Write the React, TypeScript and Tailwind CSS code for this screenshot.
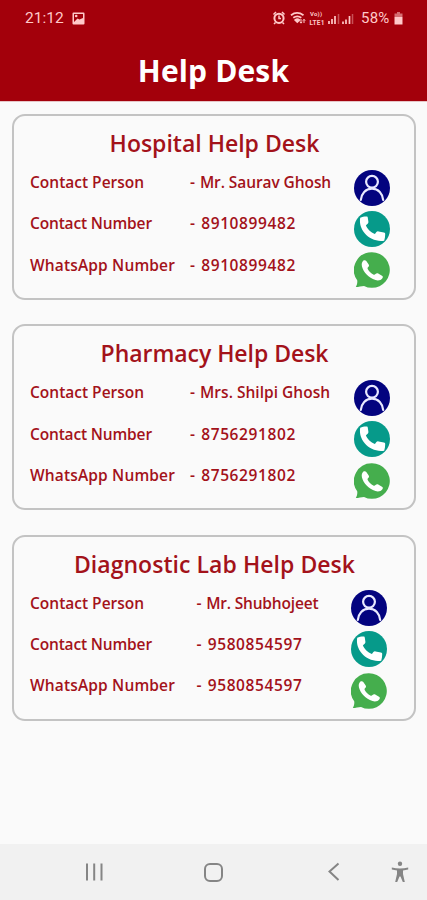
import React from 'react';

interface Desk {
  title: string;
  titleClass: string;
  person: string;
  personClass: string;
  number: string;
  valueClass: string;
  iconClass: string;
}

const desks: Desk[] = [
  {
    title: 'Hospital Help Desk',
    titleClass: 'tracking-[0px]',
    person: 'Mr. Saurav Ghosh',
    personClass: 'tracking-[-0.08px]',
    number: '8910899482',
    valueClass: 'pl-[160px]',
    iconClass: 'mr-[24px]',
  },
  {
    title: 'Pharmacy Help Desk',
    titleClass: 'tracking-[-0.05px]',
    person: 'Mrs. Shilpi Ghosh',
    personClass: 'tracking-[0.02px]',
    number: '8756291802',
    valueClass: 'pl-[160px]',
    iconClass: 'mr-[24px]',
  },
  {
    title: 'Diagnostic Lab Help Desk',
    titleClass: 'tracking-[0.05px]',
    person: 'Mr. Shubhojeet',
    personClass: 'tracking-[-0.18px]',
    number: '9580854597',
    valueClass: 'pl-[166.500px]',
    iconClass: 'mr-[27px]',
  },
];

const PersonIcon = () => (
  <svg viewBox="0 0 36 36" className="block size-9">
    <circle cx="18" cy="18" r="18" fill="#03037f" />
    <g fill="none" stroke="#e9e9ff" strokeWidth="2.200" strokeLinecap="round">
      <circle cx="18" cy="11.800" r="5.900" />
      <path d="M6.800 30C7.400 23.500 11.500 18.700 18 18.700s10.600 4.800 11.200 11.300" />
    </g>
  </svg>
);

const PhoneIcon = () => (
  <svg viewBox="0 0 36 36" className="block size-9">
    <circle cx="18" cy="18" r="18" fill="#069a8a" />
    <path
      d="M6.200 6.700C8.200 5.900 10.600 5.400 12.600 5.500C13.400 5.500 13.700 6 13.800 6.700L14.400 10.800C14.500 11.600 14.300 12.200 13.700 12.700L11.900 14.300C13.300 18 16.800 21.500 20.900 23L22.400 21.100C23 20.400 23.600 20.200 24.500 20.400L29.900 21.500C30.900 21.700 31.200 22.200 31.200 23.100C31.200 25.500 30.900 27.600 30.200 29.700C22.500 30.800 15.300 27.900 10.700 22.300C6.900 17.700 5.300 12.300 6.200 6.700Z"
      fill="#fff"
    />
  </svg>
);

const WhatsAppIcon = () => (
  <svg viewBox="0 0 36 36" className="block size-9">
    <path
      d="M18 .2A17.800 17.800 0 1 1 10 33.900C7.500 34.100 4.500 34.900 1.800 35C3 32.800 3.600 30.800 3.200 28.300A17.800 17.800 0 0 1 18 .2Z"
      fill="#45ae4d"
    />
    <path
      d="M9.400 8.600C10.400 7.900 11.500 8 12.300 8.900L14.700 12.400C15.300 13.400 15 14.200 14.200 15.100C13.400 16 13.400 16.500 14 17.600C15.200 19.700 17 21.500 19.300 22.500C20.200 22.900 20.800 22.800 21.500 22.100C22.400 21.200 23.200 21 24.200 21.600L28 23.800C29 24.500 29.100 25.200 28.400 26.200C26.900 28.200 24.200 28.900 21.500 28C14.500 25.600 9.500 20.700 7.900 14.300C7.400 12.200 7.900 10 9.400 8.600Z"
      fill="#fff"
    />
  </svg>
);

const StatusBar = () => (
  <div className="flex h-9 items-center pl-[25px] text-[#ffc9c9]">
    <span className="w-[47px] pt-[2px] font-[Roboto] text-[15.500px]">21:12</span>
    <svg viewBox="0 0 13 13" className="size-[13px]">
      <path d="M1.500 .5h10a1 1 0 0 1 1 1v10a1 1 0 0 1-1 1h-10a1 1 0 0 1-1-1v-10a1 1 0 0 1 1-1Z" fill="currentColor" />
      <path d="M2 2h9v4L7.500 7.500 5.500 6.500 2 10Z" fill="#a3000b" />
      <circle cx="4.200" cy="4" r="1.300" fill="currentColor" />
    </svg>
    <svg viewBox="0 0 84 16" className="ml-[187px] h-4 w-[84px]" fill="none" stroke="currentColor">
      <g>
        <circle cx="7" cy="8.300" r="4.600" strokeWidth="2" />
        <path d="M1.500 4.500 4 2M12.500 4.500 10 2M3.500 12.500 2 14M10.500 12.500 12 14M7 5.500v3h2" strokeWidth="1.500" />
      </g>
      <g strokeWidth="1.800">
        <path d="M19 5.200q6-4.500 12.500 0" />
        <path d="M21.300 7.800q4-3 8 0" />
        <path d="M23.300 10q2-1.500 4 0L25.300 12Z" fill="currentColor" />
        <path d="M29 9v4M27.800 11.800l1.200 1.400 1.200-1.400M32 13V9.500M30.800 10.700l1.200-1.400 1.200 1.400" strokeWidth="1" />
      </g>
      <g fill="currentColor" stroke="none" fontFamily="Roboto" fontWeight="700">
        <text x="38" y="6" fontSize="6" textLength="12">Vo))</text>
        <text x="37.500" y="14.500" fontSize="6.500" textLength="15">LTE1</text>
      </g>
      <path d="M57 14v-3M60 14V9M63 14V6" strokeWidth="1.700" />
      <path d="M66.500 14V4M80.500 14V4" strokeWidth="1.500" opacity=".4" />
      <path d="M71 14v-2.500M74 14V9.500M77.500 14V6" strokeWidth="1.700" />
    </svg>
    <span className="ml-[5px] w-[33px] pt-px font-[Roboto] text-[15px] tracking-[0.2px]">58%</span>
    <svg viewBox="0 0 9 13" className="h-[13px] w-[9px]">
      <path d="M3 0h3v1.500h2.500V5H.5V1.500H3Z" fill="currentColor" opacity=".55" />
      <path d="M.5 5h8v7.500h-8Z" fill="currentColor" />
    </svg>
  </div>
);

const DeskCard = ({ desk }: { desk: Desk }) => {
  const rows = [
    { label: 'Contact Person', value: desk.person, labelClass: 'tracking-[0px]', valueClass: desk.personClass, icon: <PersonIcon /> },
    { label: 'Contact Number', value: desk.number, labelClass: 'tracking-[-0.16px]', valueClass: 'tracking-[0.6px]', icon: <PhoneIcon /> },
    { label: 'WhatsApp Number', value: desk.number, labelClass: 'tracking-[0.15px]', valueClass: 'tracking-[0.6px]', icon: <WhatsAppIcon /> },
  ];

  return (
    <section className="h-[186px] rounded-[13px] border-2 border-[#c3c3c3] pt-[11px] pl-4 text-[#a3121a]">
      <h2 className="mr-[15px] h-10 text-center text-[23px] leading-8 font-semibold whitespace-nowrap">
        <span className={desk.titleClass}>{desk.title}</span>
      </h2>
      {rows.map((row) => (
        <div key={row.label} className="flex h-[41.400px] text-[15.500px] leading-[31px] font-semibold whitespace-nowrap">
          <div className="grid grow">
            <span className={`col-start-1 row-start-1 ${row.labelClass}`}>{row.label}</span>
            <span className={`col-start-1 row-start-1 ${desk.valueClass} ${row.valueClass}`}>
              <span className="mr-px">-</span> {row.value}
            </span>
          </div>
          <div className={`pt-[2.500px] ${desk.iconClass}`}>{row.icon}</div>
        </div>
      ))}
    </section>
  );
};

const NavBar = () => (
  <nav className="flex h-14 items-center bg-[#f1f1f1] pl-[85px] text-[#858585]">
    <svg viewBox="0 0 18 18" className="size-[18px]" stroke="currentColor" strokeWidth="2">
      <path d="M2 .5v17M9.200 .5v17M16.500 .5v17" />
    </svg>
    <div className="ml-[101px] size-[19px] rounded-[6px] border-2 border-current" />
    <svg viewBox="0 0 12 20" className="ml-[105px] h-5 w-3" fill="none" stroke="currentColor" strokeWidth="2">
      <path d="M10.500 1.500 1.500 9.500l9 8.500" />
    </svg>
    <svg viewBox="0 0 18 22" className="ml-[51px] h-[22px] w-[18px]" fill="currentColor">
      <circle cx="9" cy="2.700" r="2.200" />
      <path d="M.8 6.500Q9 8.500 17.200 6.500V8.500L12 9.500V13L13.800 21H11.800L9.500 15.500H8.500L6.200 21H4.200L6 13V9.500L.8 8.500Z" />
    </svg>
  </nav>
);

export default function App() {
  return (
    <div className="flex h-[900px] w-[427px] flex-col overflow-hidden bg-[#fafafa] font-['Open_Sans',sans-serif]">
      <header className="h-[101px] shrink-0 bg-[#a3000b]">
        <StatusBar />
        <h1 className="pt-px text-center text-[30px] leading-[68px] font-bold text-white">
          <span className="tracking-[0.15px]">Help Desk</span>
        </h1>
      </header>
      <main className="flex grow flex-col gap-[24.300px] border-t border-[#e6c5c7] pt-3 pr-[11px] pl-3">
        {desks.map((desk) => (
          <DeskCard key={desk.title} desk={desk} />
        ))}
      </main>
      <NavBar />
    </div>
  );
}
